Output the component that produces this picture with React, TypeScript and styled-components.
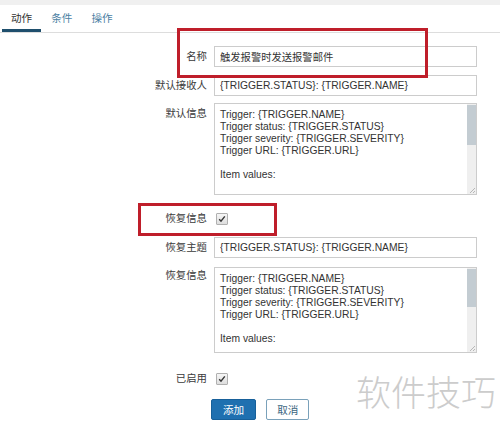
import React from 'react';
import styled, { createGlobalStyle } from 'styled-components';

const GlobalStyle = createGlobalStyle`
  html, body {
    margin: 0;
    padding: 0;
    background: #ffffff;
  }
  body {
    font-family: "Liberation Sans", "Noto Sans CJK SC", sans-serif;
    color: #333333;
  }
`;

const Page = styled.div`
  position: relative;
  width: 500px;
  height: 426px;
  overflow: hidden;
  background: #ffffff;
  border-top: 5px solid #f0f0f0;
  box-sizing: border-box;
`;

/**
 * 顶部标签页
 */
const TabBar = styled.ul`
  display: flex;
  margin: 0;
  padding: 0 0 0 2px;
  list-style: none;
  height: 28px;
  border-bottom: 1px solid #dddddd;
  box-sizing: border-box;
`;

const Tab = styled.li<{ $active?: boolean }>`
  display: flex;
  align-items: center;
  padding: 0 9px;
  margin-right: 1px;
  font-size: 10.6px;
  color: ${(props) => (props.$active ? '#333333' : '#4c7fa3')};
  border-bottom: ${(props) => (props.$active ? '3px solid #1f4f6d' : '3px solid transparent')};
`;

const Form = styled.div`
  display: flex;
  flex-direction: column;
  padding-top: 13px;
`;

interface IRowProps {
  $mt?: number;
}

const FormRow = styled.div<IRowProps>`
  display: flex;
  align-items: flex-start;
  gap: 7px;
  margin-top: ${(props) => props.$mt || 0}px;
`;

const Label = styled.label<{ $offset?: number }>`
  width: 207px;
  flex: none;
  text-align: right;
  font-size: 10.4px;
  line-height: 21px;
  color: #3a3a3a;
  margin-top: ${(props) => props.$offset || 0}px;
`;

const TextInput = styled.input`
  width: 263px;
  height: 21px;
  box-sizing: border-box;
  border: 1px solid #cccccc;
  padding: 0 5px;
  font-family: inherit;
  font-size: 10.3px;
  color: #333333;
  outline: none;
`;

/**
 * 多行文本框 + 滚动条
 */
const AreaBox = styled.div<{ $h: number }>`
  position: relative;
  width: 263px;
  height: ${(props) => props.$h}px;
`;

const TextArea = styled.textarea`
  display: block;
  width: 100%;
  height: 100%;
  box-sizing: border-box;
  border: 1px solid #cccccc;
  padding: 5px 14px 5px 5px;
  font-family: inherit;
  font-size: 10.3px;
  line-height: 12px;
  color: #333333;
  resize: none;
  overflow: hidden;
  outline: none;
`;

const ScrollTrack = styled.div`
  position: absolute;
  top: 1px;
  right: 1px;
  bottom: 1px;
  width: 9px;
  display: flex;
  flex-direction: column;
  justify-content: space-between;
  background: #efefef;
`;

const ScrollThumb = styled.div<{ $h: number }>`
  height: ${(props) => props.$h}px;
  margin-top: 1px;
  background: #c3ccd2;
`;

const Grip = () => (
  <svg width="9" height="9" viewBox="0 0 9 9">
    <path d="M8 3 L3 8 M8 6 L6 8" stroke="#a8a8a8" strokeWidth="0.8" />
  </svg>
);

const CheckBox = styled.span`
  display: inline-flex;
  align-items: center;
  justify-content: center;
  width: 10px;
  height: 10px;
  margin: 5px 0 0 2px;
  border: 1px solid #b0b0b0;
  border-radius: 1px;
  background: linear-gradient(#f6f6f6, #dedede);
`;

const ButtonBar = styled.div`
  display: flex;
  gap: 10px;
  margin-top: 10px;
  padding-left: 211px;
`;

const Button = styled.button<{ $primary?: boolean }>`
  height: 21px;
  padding: 0 ${(props) => (props.$primary ? 11 : 10)}px;
  font-family: inherit;
  font-size: 10.6px;
  border-radius: 2px;
  border: 1px solid ${(props) => (props.$primary ? '#17609a' : '#7aa1ba')};
  background: ${(props) => (props.$primary ? '#1f70b0' : '#ffffff')};
  color: ${(props) => (props.$primary ? '#ffffff' : '#3c6580')};
`;

/**
 * 红色标注框
 */
const Marker = styled.div`
  position: absolute;
  border: 3px solid #bf1e2a;
  box-sizing: border-box;
  pointer-events: none;
`;

const Watermark = styled.div`
  position: absolute;
  left: 356px;
  top: 368px;
  font-family: "Noto Sans CJK SC", sans-serif;
  font-weight: 300;
  font-size: 35px;
  line-height: 1;
  color: #cccccc;
  pointer-events: none;
`;

const Check = () => (
  <svg width="8" height="8" viewBox="0 0 8 8">
    <path d="M1.2 4.3 L3 6.2 L6.8 1.4" fill="none" stroke="#333333" strokeWidth="1.4" />
  </svg>
);

const message = `Trigger: {TRIGGER.NAME}
Trigger status: {TRIGGER.STATUS}
Trigger severity: {TRIGGER.SEVERITY}
Trigger URL: {TRIGGER.URL}

Item values:

1. {ITEM.NAME1} ({HOST.NAME1}:{ITEM.KEY1}): {ITEM.VALUE1}
2. {ITEM.NAME2} ({HOST.NAME2}:{ITEM.KEY2}): {ITEM.VALUE2}
3. {ITEM.NAME3} ({HOST.NAME3}:{ITEM.KEY3}): {ITEM.VALUE3}

Original event ID: {EVENT.ID}`;

const subject = '{TRIGGER.STATUS}: {TRIGGER.NAME}';

const MessageArea: React.FC<{ height: number; thumb: number }> = ({ height, thumb }) => (
  <AreaBox $h={height}>
    <TextArea defaultValue={message} />
    <ScrollTrack>
      <ScrollThumb $h={thumb} />
      <Grip />
    </ScrollTrack>
  </AreaBox>
);

const App: React.FC = () => {
  return (
    <Page>
      <GlobalStyle />
      <TabBar>
        <Tab $active>动作</Tab>
        <Tab>条件</Tab>
        <Tab>操作</Tab>
      </TabBar>
      <Form>
        <FormRow>
          <Label>名称</Label>
          <TextInput defaultValue="触发报警时发送报警邮件" />
        </FormRow>
        <FormRow $mt={8}>
          <Label>默认接收人</Label>
          <TextInput defaultValue={subject} />
        </FormRow>
        <FormRow $mt={7}>
          <Label>默认信息</Label>
          <MessageArea height={92} thumb={40} />
        </FormRow>
        <FormRow $mt={13}>
          <Label>恢复信息</Label>
          <CheckBox><Check /></CheckBox>
        </FormRow>
        <FormRow $mt={8}>
          <Label>恢复主题</Label>
          <TextInput defaultValue={subject} />
        </FormRow>
        <FormRow $mt={9}>
          <Label $offset={-2}>恢复信息</Label>
          <MessageArea height={86} thumb={38} />
        </FormRow>
        <FormRow $mt={15}>
          <Label>已启用</Label>
          <CheckBox><Check /></CheckBox>
        </FormRow>
        <ButtonBar>
          <Button $primary>添加</Button>
          <Button>取消</Button>
        </ButtonBar>
      </Form>
      <Marker style={{ left: 177, top: 23, width: 251, height: 50 }} />
      <Marker style={{ left: 138, top: 198, width: 139, height: 33 }} />
      <Watermark>软件技巧</Watermark>
    </Page>
  );
};

export default App;
